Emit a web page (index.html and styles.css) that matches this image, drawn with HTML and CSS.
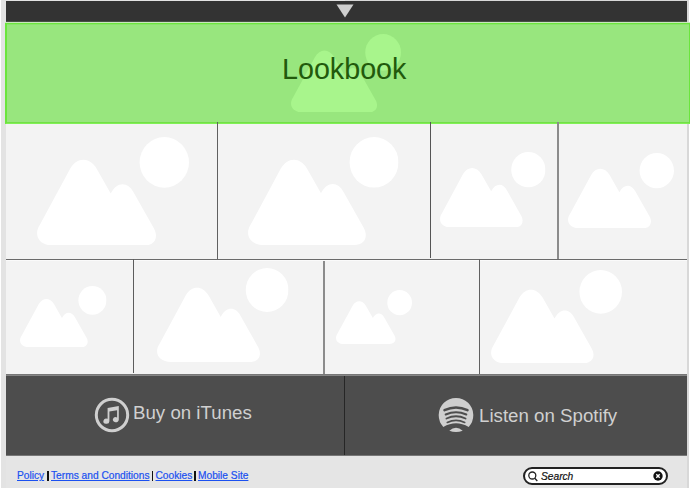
FILE: index.html
```html
<!DOCTYPE html>
<html lang="en">
<head>
<meta charset="utf-8">
<title>Lookbook</title>
<link rel="stylesheet" href="styles.css">
</head>
<body>
<svg class="defs" aria-hidden="true">
  <symbol id="picture" viewBox="0 0 152 108.5" preserveAspectRatio="none">
    <path d="M16 108.5C2 108.5-4 98 3 87.500L33 32C40 19.800 52.500 19.800 59.700 31.800L73.700 56.500C80 44 91 44.500 96.500 55.200L117 91.500C122 101 117 108.500 107.500 108.500Z"/>
    <ellipse cx="127.300" cy="25.400" rx="24.700" ry="25.400"/>
  </symbol>
</svg>
<div class="page">
  <header class="topbar">
    <svg class="arrow" viewBox="0 0 18 14"><path d="M.5.500H17.500L9 13.500Z"/></svg>
  </header>
  <section class="hero">
    <svg class="pic hero-pic"><use href="#picture"/></svg>
    <h1>Lookbook</h1>
  </section>
  <main>
    <div class="row row-one">
      <div class="cell a1"><svg class="pic"><use href="#picture"/></svg></div>
      <div class="cell a2"><svg class="pic"><use href="#picture"/></svg></div>
      <div class="cell a3"><svg class="pic"><use href="#picture"/></svg></div>
      <div class="cell a4"><svg class="pic"><use href="#picture"/></svg></div>
    </div>
    <div class="row row-two">
      <div class="cell b1"><svg class="pic"><use href="#picture"/></svg></div>
      <div class="cell b2"><svg class="pic"><use href="#picture"/></svg></div>
      <div class="cell b3"><svg class="pic"><use href="#picture"/></svg></div>
      <div class="cell b4"><svg class="pic"><use href="#picture"/></svg></div>
    </div>
  </main>
  <section class="stores">
    <a class="store itunes">
      <svg class="logo" viewBox="0 0 36 36">
        <circle cx="18" cy="18" r="15.700" fill="none" stroke="#cfcfcf" stroke-width="3"/>
        <path d="M13.600 10.900 24.800 9v13.800a3 2.600 0 1 1-1.700-2.400v-7.100l-7.700 1.300v9.700a3 2.600 0 1 1-1.800-2.500Z" fill="#cfcfcf"/>
      </svg>
      <span>Buy on iTunes</span>
    </a>
    <a class="store spotify">
      <svg class="logo" viewBox="0 0 36 36">
        <path d="M5.300 30A17.300 17.300 0 1 1 30.700 30Q18 22.500 5.300 30Z" fill="#cfcfcf"/>
        <path d="M11.300 33.700Q18 28 24.700 33.700Q18 36.500 11.300 33.700Z" fill="#cfcfcf"/>
        <g fill="none" stroke="#4d4d4d" stroke-linecap="round">
          <path d="M6.500 13.200Q18 7.800 29.500 13.200" stroke-width="2.500"/>
          <path d="M7.700 17.500Q18 12.900 28.300 17.500" stroke-width="2"/>
          <path d="M8.500 21.500Q18 17.100 27.500 21.500" stroke-width="1.900"/>
          <path d="M9.300 25.400Q18 21.200 26.700 25.400" stroke-width="1.700"/>
        </g>
      </svg>
      <span>Listen on Spotify</span>
    </a>
  </section>
  <footer>
    <nav><a class="l1">Policy</a><i class="s1"></i><a class="l2">Terms and Conditions</a><i class="s2"></i><a class="l3">Cookies</a><i class="s3"></i><a class="l4">Mobile Site</a></nav>
    <div class="search">
      <svg class="lens" viewBox="0 0 10 11"><circle cx="4.300" cy="4.500" r="3.500"/><path d="m6.800 7.200 2.500 2.800"/></svg>
      <span>Search</span>
      <svg class="clear" viewBox="0 0 10 10"><circle cx="5" cy="5" r="4.700"/><path d="m3.300 3.300 3.400 3.400m0-3.400-3.400 3.400"/></svg>
    </div>
  </footer>
</div>
</body>
</html>
```
FILE: styles.css
```css
* { box-sizing: border-box; }
body {
  margin: 0;
  background: #fff;
  font-family: "Liberation Sans", Arial, sans-serif;
  overflow: hidden;
}
svg { display: block; flex: none; }
.defs { position: absolute; width: 0; height: 0; }
.page {
  width: 688px;
  height: 488px;
  margin-left: 1px;
  padding: 1px 2px 0 5px;
  background: linear-gradient(90deg, #e3e3e3 0 50%, #d8d8d8 50%);
  display: flex;
  flex-direction: column;
}
.topbar {
  height: 21px;
  flex: none;
  padding-top: 3px;
  background: #333;
  border-bottom: 1px solid #485145;
}
.arrow { width: 18px; height: 14px; margin-left: 330px; fill: #cfcfcf; }
.hero {
  position: relative;
  z-index: 1;
  flex: none;
  width: 685px;
  height: 101px;
  margin: 1px 0 0 -1px;
  display: grid;
  background: #98e67e;
  border: 1px solid #6be53d;
  border-left-width: 2px;
  border-bottom-color: #80f055;
  box-shadow: 0 -1px #c9e8bd, inset 0 -1px #72e047, inset 0 1px #8ae56a;
}
.hero > * { grid-area: 1 / 1; }
.hero-pic { width: 110px; height: 78.500px; margin: 9.500px 0 0 284px; fill: #a8f58c; }
h1 {
  margin: 29px 0 0 275px;
  font-size: 28.700px;
  line-height: 33px;
  font-weight: 400;
  color: #225a0c;
}
main { flex: none; height: 251px; }
.row { display: flex; background: #f3f3f3; }
.row-one { height: 136px; border-bottom: 1px solid #6a6a6a; }
.row-two { height: 115px; border-top: 1px solid #fafafa; border-bottom: 1px solid #777; }
.cell { position: relative; flex: none; fill: #fff; }
.cell:not(:last-child)::after {
  content: "";
  position: absolute;
  z-index: 2;
  right: 0;
  top: -2px;
  bottom: 0;
  width: 1px;
  background: #606060;
}
.a1 { width: 212px; padding: 12.500px 0 0 31px; }
.a1 .pic { width: 152px; height: 108.500px; }
.a2 { width: 213px; padding: 13px 0 0 30px; }
.a2 .pic { width: 150.500px; height: 108px; }
.cell.a2::after { background: #555; bottom: 1px; }
.a3 { width: 128px; padding: 27.700px 0 0 9px; }
.a3 .pic { width: 105.500px; height: 75.500px; }
.cell.a3::after { width: 2px; background: #8b8b8b; }
.a4 { width: 128px; padding: 29px 0 0 9px; }
.a4 .pic { width: 106px; height: 75.300px; }
.b1 { width: 128px; padding: 25px 0 0 14px; }
.b1 .pic { width: 86.500px; height: 61.300px; }
.cell.b1::after { background: #5c5c5c; bottom: 1px; }
.b2 { width: 191px; padding: 7px 0 0 23px; }
.b2 .pic { width: 131.500px; height: 94px; }
.cell.b2::after { width: 2px; top: 0; background: #8b8b8b; }
.b3 { width: 155px; padding: 28.500px 0 0 11px; }
.b3 .pic { width: 76px; height: 54px; }
.b4 { width: 207px; padding: 9px 0 0 11px; }
.b4 .pic { width: 131px; height: 93.300px; }
.stores {
  display: flex;
  flex: none;
  height: 81px;
  background: #4d4d4d;
  border-top: 1px solid #858585;
  border-bottom: 1px solid #777;
}
.store { display: flex; font-size: 18.700px; line-height: 22px; color: #d0d0d0; }
.logo { width: 36px; height: 36px; margin-top: 20.500px; }
.itunes { width: 339px; padding-left: 88px; border-right: 1px solid #262626; }
.itunes span { margin: 26px 0 0 3px; }
.spotify { padding-left: 93px; }
.spotify span { margin: 29px 0 0 5px; }
footer {
  flex: 1;
  display: flex;
  align-items: flex-start;
  justify-content: space-between;
  background: #e5e5e5;
  padding: 11px 19px 0 11px;
}
nav { display: flex; align-items: flex-start; font-size: 10.200px; line-height: 18px; color: #1a50f0; white-space: nowrap; -webkit-text-stroke: .2px #1a50f0; }
nav a { text-decoration: underline; text-underline-offset: 1px; }
nav i { width: 1.500px; height: 10px; margin-top: 4px; background: #111; }
.l1 { width: 27px; }
.s1 { margin-left: 3px; margin-right: 2.500px; }
.l2 { width: 98px; }
.s2 { margin-left: 2.500px; margin-right: 2.500px; }
.l3 { width: 36px; }
.s3 { margin-left: 2.500px; margin-right: 2.500px; }
.search {
  display: flex;
  align-items: center;
  width: 145px;
  height: 18px;
  padding: 0 3px;
  border: 2px solid #222;
  border-radius: 9px;
  background: #fff;
  font-size: 10.200px;
  font-style: italic;
  color: #111;
  -webkit-text-stroke: .2px #111;
}
.lens { width: 10px; height: 11px; margin-right: 3px; fill: none; stroke: #222; stroke-width: 1.300; }
.clear { width: 10px; height: 10px; margin-left: auto; fill: #111; }
.clear path { stroke: #fff; stroke-width: 1.400; }
```
